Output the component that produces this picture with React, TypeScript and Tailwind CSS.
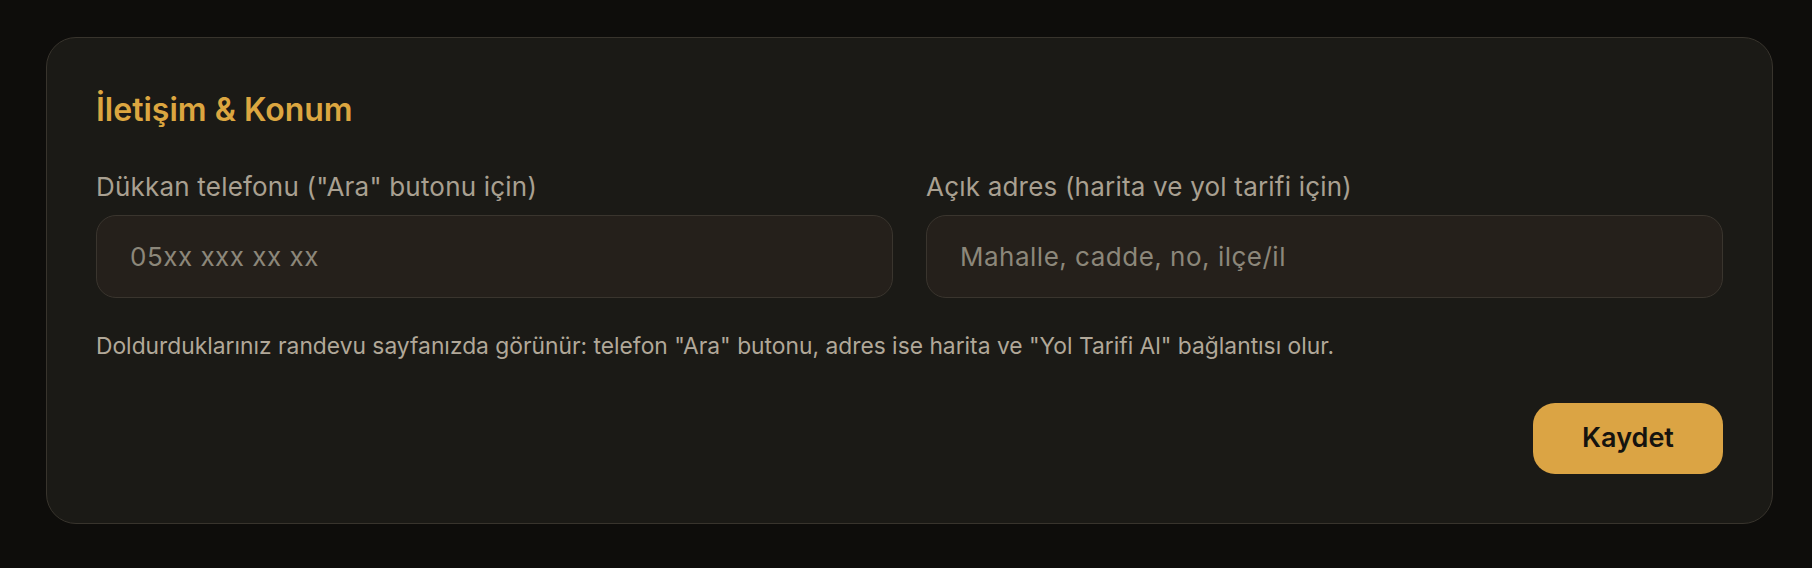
export default function App() {
  return (
    <div className="min-h-screen w-full bg-[#0e0d0b] pt-[37px] pl-[46px]">
      <div className="w-[1727px] rounded-[30px] border border-[#38342d] bg-[#1b1a16] px-[49px] pt-[54px] pb-[49px]">
        <h2 className="font-['Inter',sans-serif] text-[32px] leading-[36px] font-semibold text-[#dca640]">
          İletişim &amp; Konum
        </h2>
        <div className="mt-[43px] grid grid-cols-2 gap-x-[33px]">
          <div className="flex flex-col gap-[12px]">
            <label className="font-['Inter',sans-serif] text-[26px] leading-[32px] tracking-[0.2px] text-[#a9a091]">
              Dükkan telefonu ("Ara" butonu için)
            </label>
            <input
              type="text"
              placeholder="05xx xxx xx xx"
              className="h-[83px] w-full rounded-[20px] border border-[#3a352e] bg-[#25201b] px-[33px] font-['Inter',sans-serif] text-[26px] tracking-[0.5px] text-[#d6cfc2] placeholder:text-[#8c877a] outline-none"
            />
          </div>
          <div className="flex flex-col gap-[12px]">
            <label className="font-['Inter',sans-serif] text-[26px] leading-[32px] tracking-[0.2px] text-[#a9a091]">
              Açık adres (harita ve yol tarifi için)
            </label>
            <input
              type="text"
              placeholder="Mahalle, cadde, no, ilçe/il"
              className="h-[83px] w-full rounded-[20px] border border-[#3a352e] bg-[#25201b] px-[33px] font-['Inter',sans-serif] text-[26px] tracking-[0.5px] text-[#d6cfc2] placeholder:text-[#8c877a] outline-none"
            />
          </div>
        </div>
        <p className="mt-[33px] font-['Inter',sans-serif] text-[22.8px] leading-[30px] text-[#b1a899]">
          Doldurduklarınız randevu sayfanızda görünür: telefon "Ara" butonu, adres ise harita ve "Yol Tarifi Al" bağlantısı olur.
        </p>
        <div className="mt-[42px] flex justify-end">
          <button className="h-[71px] w-[190px] rounded-[22px] bg-[#dba444] font-['Inter',sans-serif] text-[27px] font-semibold text-[#15130f]">
            Kaydet
          </button>
        </div>
      </div>
    </div>
  );
}
